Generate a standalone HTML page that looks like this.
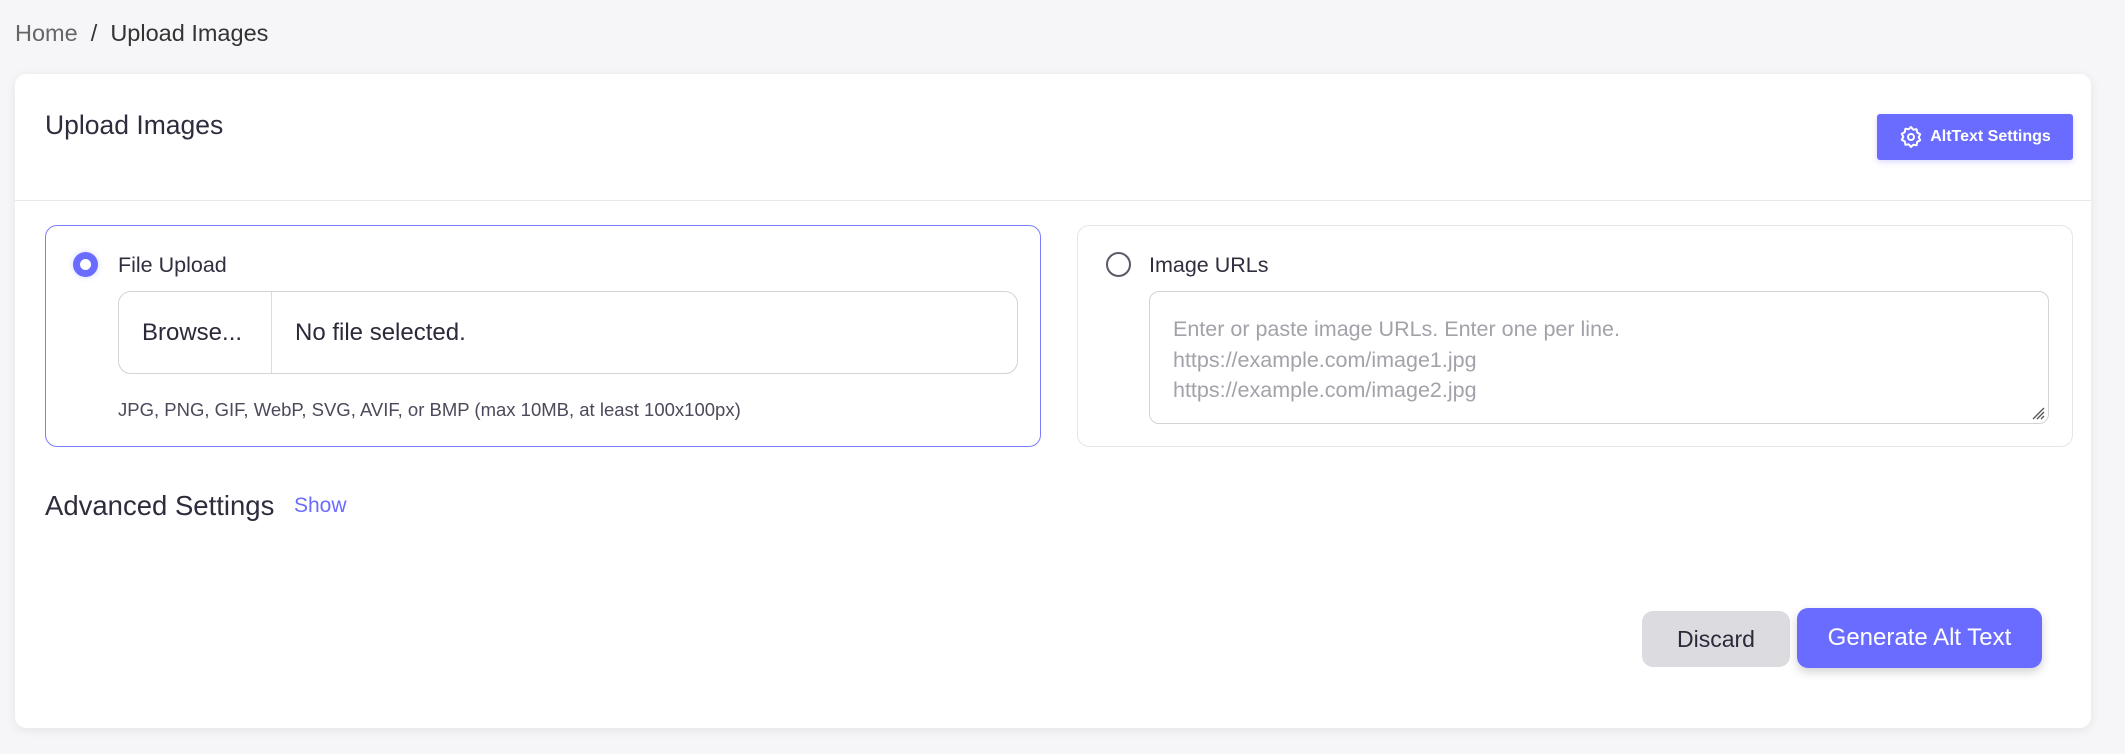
<!DOCTYPE html>
<html><head><meta charset="utf-8"><style>
*{box-sizing:border-box;margin:0;padding:0}
body{width:2125px;height:754px;background:#f6f6f8;font-family:"Liberation Sans",sans-serif;color:#2f2f3f;position:relative;overflow:hidden}
.abs{position:absolute}
.crumb{left:15px;top:20px;font-size:23.5px;color:#333}
.crumb .h{color:#666}
.card{left:15px;top:74px;width:2076px;height:654px;background:#fff;border-radius:11px;box-shadow:0 2px 10px rgba(0,0,0,.08)}
.title{left:45px;top:110px;font-size:26.5px;color:#2d2d3d}
.divider{left:15px;top:200px;width:2076px;height:1px;background:#e8e8ec}
.btnset{left:1877px;top:114px;width:196px;height:46px;background:#6a6cff;border-radius:3px;color:#fff;font-size:16px;font-weight:bold;display:flex;align-items:center;justify-content:center;gap:7px;box-shadow:0 2px 6px rgba(106,108,255,.25)}
.box{top:225px;height:222px;border-radius:12px;background:#fff}
.radio{width:25px;height:25px;border-radius:50%}
.lbl{font-size:21.5px;color:#2f2f3f}
.file{left:118px;top:291px;width:900px;height:83px;border:1px solid #d3d3d8;border-radius:13px;display:flex;align-items:center;font-size:24px;color:#2a2a3a}
.ph{font-size:21.5px;color:#a2a2aa;line-height:30.5px}
.btn{border-radius:11px;display:flex;align-items:center;justify-content:center;font-size:23px}
</style></head><body>
<div class="abs crumb"><span class="h">Home</span>&nbsp; /&nbsp; Upload Images</div>
<div class="abs card"></div>
<div class="abs title">Upload Images</div>
<div class="abs divider"></div>
<div class="abs btnset"><svg width="24" height="24" viewBox="0 0 24 24" fill="none" stroke="#fff" stroke-width="2" stroke-linejoin="round"><path d="M12 2l2.2 2.6 3.4-.4.6 3.3 3 1.7-1.5 3 1.5 3-3 1.7-.6 3.3-3.4-.4L12 22l-2.2-2.6-3.4.4-.6-3.3-3-1.7 1.5-3-1.5-3 3-1.7.6-3.3 3.4.4z"/><circle cx="12" cy="12" r="3"/></svg>AltText Settings</div>

<div class="abs box" style="left:45px;width:996px;border:1.5px solid #7b7dff"></div>
<div class="abs radio" style="left:73px;top:252px;border:7px solid #6a6cff;box-shadow:0 0 6px rgba(106,108,255,.3)"></div>
<div class="abs lbl" style="left:118px;top:253px">File Upload</div>
<div class="abs file"><div style="width:153px;height:100%;border-right:1px solid #dcdce0;display:flex;align-items:center;padding-left:23px">Browse...</div><div style="padding-left:23px">No file selected.</div></div>
<div class="abs" style="left:118px;top:399px;font-size:18.5px;color:#4a4a5a">JPG, PNG, GIF, WebP, SVG, AVIF, or BMP (max 10MB, at least 100x100px)</div>

<div class="abs box" style="left:1077px;width:996px;border:1px solid #e6e6ea"></div>
<div class="abs radio" style="left:1106px;top:252px;border:2.5px solid #5a5a66"></div>
<div class="abs lbl" style="left:1149px;top:253px">Image URLs</div>
<div class="abs" style="left:1149px;top:291px;width:900px;height:133px;border:1px solid #d3d3d8;border-radius:10px;padding:22px 23px">
<div class="ph">Enter or paste image URLs. Enter one per line.<br>https://example.com/image1.jpg<br>https://example.com/image2.jpg</div>
<svg class="abs" style="right:3px;bottom:3px" width="14" height="14" viewBox="0 0 14 14" stroke="#555" stroke-width="1.3"><path d="M13 2L2 13M13 6L6 13M13 10L10 13"/></svg>
</div>

<div class="abs" style="left:45px;top:490px;font-size:27.5px;color:#2d2d3d">Advanced Settings</div>
<div class="abs" style="left:294px;top:494px;font-size:21px;color:#6a6cff">Show</div>

<div class="abs btn" style="left:1642px;top:611px;width:148px;height:56px;background:#dcdce0;color:#2a2a3a">Discard</div>
<div class="abs btn" style="left:1797px;top:608px;width:245px;height:60px;background:#6a6cff;color:#fff;font-size:24px;box-shadow:0 4px 10px rgba(0,0,0,.18)">Generate Alt Text</div>
</body></html>
